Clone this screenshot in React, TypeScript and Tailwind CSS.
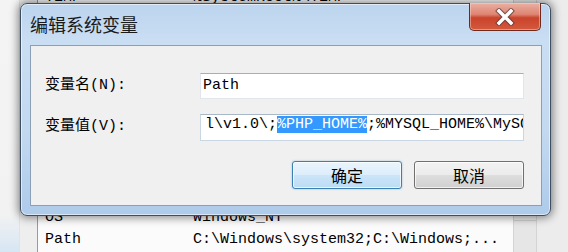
import React from "react";

const rows: [string, string][] = [
  ["TEMP", "%SystemRoot%\\TEMP"],
  ["ComSpec", "C:\\Windows\\system32\\cmd.exe"],
  ["FP_NO_HOST_CHECK", "NO"],
  ["JAVA_HOME", "C:\\Program Files\\Java"],
  ["MYSQL_HOME", "D:\\mysql"],
  ["NUMBER_OF_PROCESSORS", "4"],
  ["PHP_HOME", "D:\\php"],
  ["PATHEXT", ".COM;.EXE;.BAT;.CMD"],
  ["PROCESSOR_LEVEL", "6"],
  ["windir", "%SystemRoot%"],
  ["OS", "Windows_NT"],
  ["Path", "C:\\Windows\\system32;C:\\Windows;..."],
];

const mono = "font-['Liberation_Mono','Noto_Sans_CJK_SC',monospace]";

export default function App() {
  return (
    <div className="relative w-[568px] h-[252px] overflow-hidden bg-[#f0f0f0] flex font-['Noto_Sans_CJK_SC',sans-serif]">
      {/* background window */}
      <div className="w-[37px] h-full flex">
        <div className="w-[20px] h-full bg-[linear-gradient(180deg,#f4f4f4_0%,#f2f2f2_85%,#d6e6f4_100%)] border-r border-[#e2e2e2]" />
        <div className="flex-1 h-full bg-[#eeeeee]" />
      </div>
      <div className={`flex-1 h-full bg-[#fbfbfb] border-l border-[#9a9a9a] flex flex-col justify-end overflow-hidden pb-[1px] text-[15px] text-black ${mono}`}>
        {rows.map(([k, v]) => (
          <div key={k} className="h-[22px] shrink-0 flex items-center leading-[22px] whitespace-nowrap">
            <div className="w-[155px] pl-[7px] shrink-0">{k}</div>
            <div>{v}</div>
          </div>
        ))}
      </div>
      <div className="w-[24px] h-full bg-[#ececec] border-x border-[#d4d4d4] flex flex-col">
        <div className="h-[220px]" />
        <div className="flex-1 border-t border-[#cfcfcf] bg-[#e6e6e6]" />
      </div>
      <div className="w-[31px] h-full bg-[#ececec]" />

      {/* dialog window */}
      <div className="absolute left-[20px] top-[3px] w-[531px] h-[213px] rounded-[7px] border border-[#3e4f61] bg-[linear-gradient(180deg,#bcd4ee_0%,#cadef3_18%,#c3d9f0_60%,#aecbea_100%)] shadow-[0_0_9px_2px_rgba(0,0,0,0.45),inset_0_0_0_1px_rgba(255,255,255,0.55)] flex flex-col">
        {/* title bar */}
        <div className="h-[41px] flex items-start pl-[9px] pr-[9px]">
          <div className="mt-[11px] text-[18px] leading-[18px] text-[#1a1a1a]">编辑系统变量</div>
          <div className="ml-auto w-[72px] h-[28px] -mt-[1px] rounded-b-[5px] border border-t-0 border-[#6e2a1e] bg-[linear-gradient(180deg,#eab0a2_0%,#df8472_42%,#c9432b_55%,#d35a3d_100%)] shadow-[inset_0_0_0_1px_rgba(255,220,210,0.45)] flex items-center justify-center">
            <svg width="20" height="18" viewBox="0 0 20 18">
              <path d="M4 3 L16 15 M16 3 L4 15" stroke="#5a3a3a" strokeWidth="5.5" strokeLinecap="square" fill="none" opacity="0.75" />
              <path d="M4 3 L16 15 M16 3 L4 15" stroke="#ffffff" strokeWidth="3.4" strokeLinecap="square" fill="none" />
            </svg>
          </div>
        </div>
        {/* client area */}
        <div className="ml-[9px] mr-[8px] h-[161px] border border-[#8ba0b6] bg-[#f0f0f0] flex flex-col pl-[14px] pr-[17px] pt-[27px]">
          <div className="flex items-center h-[26px]">
            <div className={`flex-1 text-[15px] text-black ${mono}`}>变量名(N):</div>
            <div className="w-[324px] h-[26px] bg-white border border-[#e1e6ec] border-t-[#abadb3] flex items-center pl-[2px]">
              <span className={`text-[15px] leading-[24px] text-black ${mono}`}>Path</span>
            </div>
          </div>
          <div className="flex items-center h-[27px] mt-[15px]">
            <div className={`flex-1 text-[15px] text-black ${mono}`}>变量值(V):</div>
            <div className="w-[324px] h-[27px] bg-white border border-[#c9d6e4] border-t-[#a9b8c9] flex items-start pl-[4px] pt-[0px] overflow-hidden">
              <span className={`whitespace-nowrap text-[15px] leading-[19px] text-black ${mono}`}>
                {"l\\v1.0\\;"}
                <span className="bg-[#3399ff] text-white">%PHP_HOME%</span>
                {";%MYSQL_HOME%\\MySQL"}
              </span>
            </div>
          </div>
          <div className="flex justify-end gap-[12px] mt-[20px]">
            <button className="w-[110px] h-[28px] rounded-[3px] border border-[#3c7fb1] bg-[linear-gradient(180deg,#eaf5fd_0%,#dcedfb_50%,#cbe4f8_52%,#bcdcf5_100%)] shadow-[inset_0_0_0_1px_rgba(255,255,255,0.7),0_0_2px_rgba(60,127,177,0.5)] text-[16px] leading-[20px] text-black flex items-center justify-center">
              确定
            </button>
            <button className="w-[110px] h-[28px] rounded-[3px] border border-[#707070] bg-[linear-gradient(180deg,#f3f3f3_0%,#ebebeb_50%,#dddddd_52%,#d0d0d0_100%)] shadow-[inset_0_0_0_1px_rgba(255,255,255,0.7)] text-[16px] leading-[20px] text-black flex items-center justify-center">
              取消
            </button>
          </div>
        </div>
      </div>
    </div>
  );
}
